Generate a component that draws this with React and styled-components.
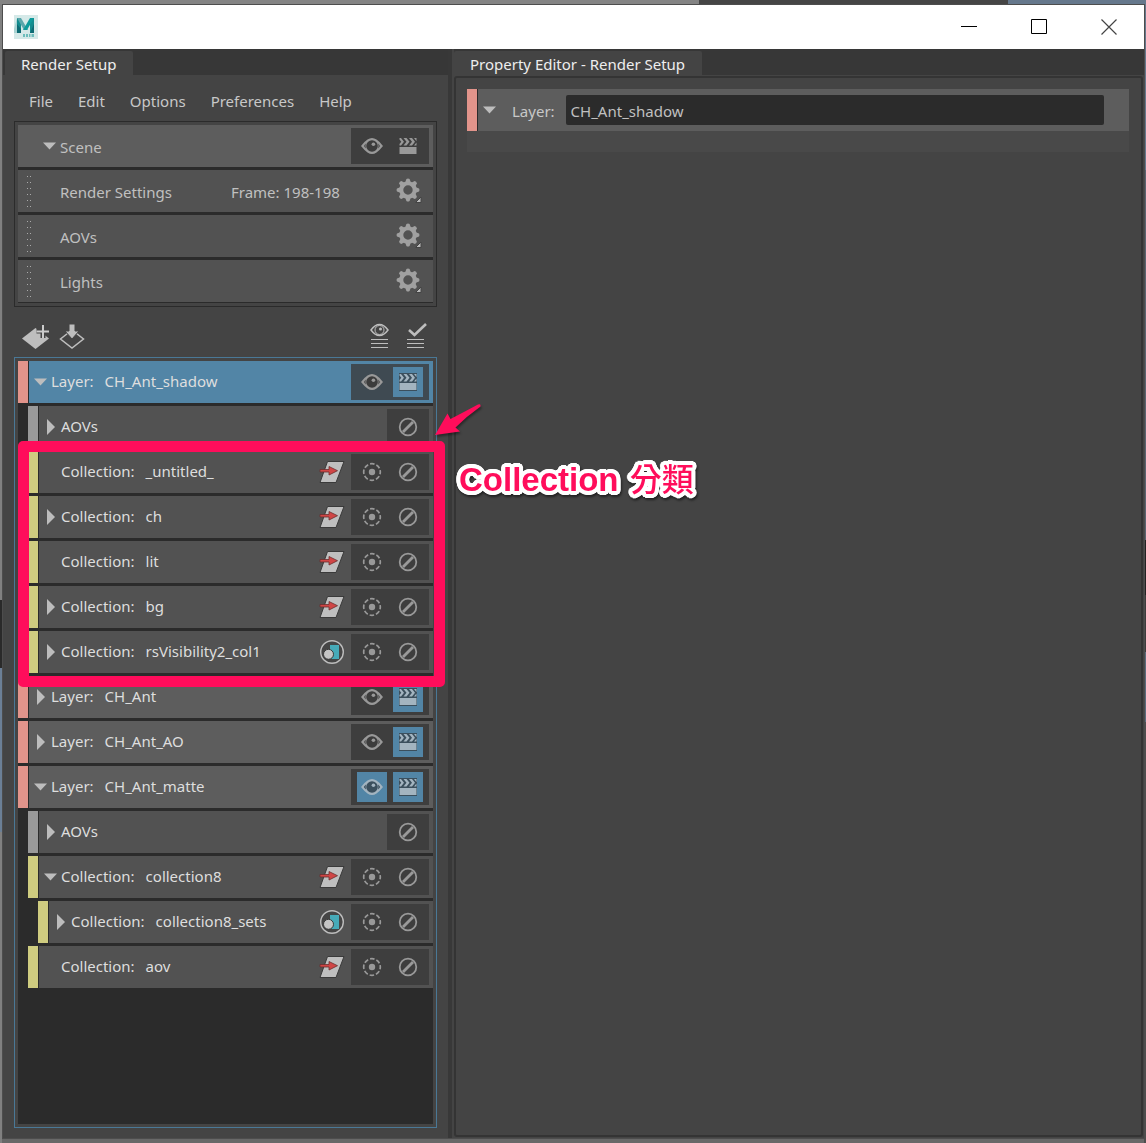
import React from "react";
import styled, { createGlobalStyle, css } from "styled-components";

const Global = createGlobalStyle`
  *, *::before, *::after { box-sizing: border-box; }
  body {
    margin: 0;
    background:
      linear-gradient(90deg, #848484 0 61%, #454545 61% 88%, #66788c 88%) top / 100% 4px no-repeat,
      linear-gradient(#808080 0 600px, #2a2a2a 600px 668px, #6b7f96 668px 832px, #808080 832px) left / 2px 100% no-repeat,
      linear-gradient(#66788c 0 170px, #5a6470 170px 540px, #222 540px 595px, #3c3c3c 595px 652px, #5a6b7c 652px 722px, #4e4e4e 722px) right / 2px 100% no-repeat,
      #686868;
    color: #c8c8c8;
    font: 15px/20px "Noto Sans", "Open Sans", sans-serif;
  }
  button, input { font: inherit; color: inherit; }
  button { border: 0; padding: 0; background: none; cursor: pointer; }
  svg { display: block; }
`;

const Screen = styled.div`
  min-height: 100vh;
  padding: 4px 1px 4px 2px;
  display: flex;
  overflow: hidden;
`;

const Window = styled.main`
  flex: 1;
  display: flex;
  flex-direction: column;
  border: 1px solid #4d4d4d;
  background: #444;
`;

const TitleBar = styled.header`
  height: 44px;
  display: flex;
  align-items: center;
  justify-content: space-between;
  padding-left: 11px;
  background: #fff;
`;

const WindowButtons = styled.div`
  display: flex;
  height: 100%;
`;

const WindowButton = styled.button`
  width: 70px;
  display: grid;
  place-items: center;
`;

const Body = styled.div`
  flex: 1;
  display: flex;
  min-height: 0;
`;

const SetupPanel = styled.section`
  width: 445px;
  flex: none;
  display: flex;
  flex-direction: column;
`;

const Divider = styled.div`
  width: 4px;
  background: #383838;
`;

const EditorPanel = styled.section`
  flex: 1;
  min-width: 0;
  display: flex;
  flex-direction: column;
  margin-left: 2px;
`;

const TabBar = styled.div`
  height: 26px;
  display: flex;
  padding: 2px 0 0 ${(p) => p.$inset}px;
  background: #373737;
`;

const Tab = styled.button`
  padding: 2px 17px 0 16px;
  border-radius: 2px 2px 0 0;
  background: #444;
  color: #eee;
  white-space: nowrap;
`;

const MenuBar = styled.nav`
  display: flex;
  gap: 25px;
  padding: 16px 26px 10px;
`;

const MenuButton = styled.button`
  height: 20px;
`;

const Frame = styled.div`
  margin: 0 11px;
  padding: 3px;
  border: 1px solid ${(p) => (p.$focused ? "#4a7896" : "#2b2b2b")};
  ${(p) =>
    p.$grow &&
    css`
      flex: 1;
      display: flex;
      margin-bottom: 10px;
    `}
`;

const Rows = styled.div`
  flex: 1;
  display: flex;
  flex-direction: column;
  gap: 3px;
  padding-bottom: 1px;
  background: #2b2b2b;
`;

const Kind = styled.span`
  margin-right: 11px;
  white-space: nowrap;
`;

const Name = styled.span`
  flex: 1;
  min-width: 0;
  white-space: nowrap;
`;

const SettingLabel = styled.span`
  width: 171px;
`;

const Row = styled.div`
  height: 42px;
  display: flex;
  align-items: center;
  margin-left: ${(p) => p.$depth * 10}px;
  padding-right: 4px;
  color: ${(p) => (p.$bright ? "#dedede" : "#c0c0c0")};
  background: ${(p) => (p.$selected ? "#5285a6" : p.$strong ? "#5d5d5d" : "#525252")};

  ${Kind}, ${Name}, ${SettingLabel} {
    padding: ${(p) => (p.$bright ? "0 0 2px" : "2px 0 0")};
  }
`;

const Stripe = styled.span`
  width: 11px;
  height: 100%;
  border-right: 1px solid #2b2b2b;
  background: ${(p) => p.$color};
`;

const Toggle = styled.button`
  width: ${(p) => (p.$wide ? 42 : 22)}px;
  height: 100%;
  display: flex;
  align-items: center;
  justify-content: flex-end;
  padding-right: 4px;
`;

const ToggleSpace = styled.span`
  width: 22px;
`;

const Grip = styled.span`
  width: 42px;
  height: 33px;
  padding-left: 9px;
`;

const ButtonTray = styled.div`
  height: 36px;
  display: flex;
  align-items: center;
  gap: 6px;
  padding: 0 6px;
  margin-left: 6px;
  background: ${(p) => (p.$selected ? "#3f4a52" : "#3e3e3e")};
`;

const IconButton = styled.button`
  width: 30px;
  height: 30px;
  display: grid;
  place-items: center;
  color: ${(p) => (p.$on ? "#a3b4c0" : "#999")};
  background: ${(p) => (p.$on ? "#5285a6" : "transparent")};
`;

const GearButton = styled(IconButton)`
  margin-right: 6px;
  color: #a0a0a0;
`;

const ToolBar = styled.div`
  height: 50px;
  display: flex;
  align-items: center;
  gap: 6px;
  padding: 10px 17px 0 18px;
`;

const ToolButton = styled(IconButton)`
  color: #bebebe;
`;

const Spacer = styled.span`
  flex: 1;
`;

const Highlight = styled.div`
  position: relative;
  display: flex;
  flex-direction: column;
  gap: 3px;

  &::after {
    content: "";
    position: absolute;
    z-index: 2;
    inset: -10px -12px -14px 0;
    border: 11px solid #ff0d5b;
    border-radius: 5px;
    pointer-events: none;
  }
`;

const Arrow = styled.svg`
  position: absolute;
  z-index: 3;
  left: 414px;
  top: -51px;
  filter: drop-shadow(1px 2px 1px rgba(0, 0, 0, 0.4));
`;

const outline = Array.from({ length: 24 }, (_, i) => {
  const angle = (i * Math.PI) / 12;
  return `${(4 * Math.cos(angle)).toFixed(2)}px ${(4 * Math.sin(angle)).toFixed(2)}px 0 #fff`;
}).join(", ");

const Note = styled.strong`
  position: absolute;
  z-index: 3;
  left: 441px;
  top: 9px;
  font: bold 33px/40px "Liberation Sans", "Noto Sans CJK TC", sans-serif;
  color: #ff0d5b;
  white-space: nowrap;
  text-shadow: ${outline}, 0 0 2px #fff;
  filter: drop-shadow(1px 2px 1px rgba(0, 0, 0, 0.5));

  span {
    margin-left: 2px;
    font-size: 32px;
    font-weight: 500;
  }
`;

const EditorBody = styled.div`
  flex: 1;
  margin: 1px 1px 1px 0;
  padding: 11px 12px 11px 11px;
  border: 2px solid #343434;
  border-radius: 3px;
`;

const LayerHeader = styled.div`
  height: 42px;
  display: flex;
  align-items: center;
  padding-right: 25px;
  background: #5d5d5d;
`;

const LayerFooter = styled.div`
  height: 21px;
  background: #494949;
`;

const LayerLabel = styled.label`
  margin: 2px 11px 0 12px;
`;

const LayerInput = styled.input`
  flex: 1;
  min-width: 0;
  height: 30px;
  padding: 2px 5px 0;
  border: 0;
  border-radius: 2px;
  background: #2b2b2b;
  color: #c0c0c0;
`;

const Eye = ({ on }) => (
  <svg width="22" height="22" viewBox="0 0 22 22">
    <path d="M0 11Q3.500 6.500 6.500 4.600 11 1.400 15.500 4.600 18.500 6.500 22 11 18.500 15.500 15.500 17.400 11 20.600 6.500 17.400 3.500 15.500 0 11Z" fill="currentColor" />
    <path d="M2.800 11Q4 9.200 5 8.400q-.8 2.600 0 5.200Q4 12.800 2.800 11ZM19.200 11Q18 9.200 17 8.400q.8 2.600 0 5.200 1-.8 2.200-2.600Z" fill={on ? "#3b4f5d" : "#555"} />
    <circle cx="11" cy="11" r="5.800" fill={on ? "#3b4f5d" : "#3c3c3c"} />
    <circle cx="12.400" cy="9.300" r="1.800" fill="currentColor" />
  </svg>
);

const Clapper = ({ on }) => (
  <svg width="18" height="18" viewBox="0 0 18 18">
    {on && <path d="M0 0h18v18H0z" fill="#3b4f5d" />}
    <path d="M.5 10h17v7H.5z" fill="currentColor" />
    <path d="M.5 1h1.500l3 3.700L2 8.500H.5V7l1.800-2.300L.5 2.500zM4.500 1h3l3 3.700-3 3.800h-3l3-3.800zM10 1h3l3 3.700-3 3.800h-3l3-3.800zM15 1h2.500v3.200zM17.500 5.500v3H15z" fill="currentColor" />
  </svg>
);

const Disable = () => (
  <svg width="20" height="20" viewBox="0 0 20 20" fill="none" stroke="currentColor">
    <circle cx="10" cy="10" r="8.300" strokeWidth="1.800" />
    <path d="M5 15 15 5" strokeWidth="2.800" />
  </svg>
);

const Isolate = () => (
  <svg width="20" height="20" viewBox="0 0 20 20">
    <circle cx="10" cy="10" r="8.300" fill="none" stroke="currentColor" strokeWidth="1.700" strokeDasharray="4.500 2.019" strokeDashoffset="2.200" />
    <circle cx="10" cy="10" r="3.200" fill="currentColor" />
  </svg>
);

const Gear = () => (
  <svg width="28" height="28" viewBox="0 0 28 28">
    <circle cx="14" cy="13" r="6.700" fill="none" stroke="currentColor" strokeWidth="4" />
    {[0, 45, 90, 135, 180, 225, 270, 315].map((a) => (
      <path key={a} d="M11 6 12.400 2q1.600-1 3.200 0L17 6z" fill="currentColor" transform={`rotate(${a} 14 13)`} />
    ))}
    <path d="M27 20v5.500h-5.500z" fill="#bbb" stroke="#444" strokeWidth="1" />
  </svg>
);

const Caret = ({ open }) =>
  open ? (
    <svg width="13" height="8" viewBox="0 0 13 8"><path d="M0 .5h13L6.500 7.500z" fill="#bdbdbd" /></svg>
  ) : (
    <svg width="13" height="16" viewBox="0 0 13 16"><path d="M3 0v16l8-8z" fill="#bdbdbd" /></svg>
  );

const CollectionIcon = () => (
  <svg width="26" height="26" viewBox="0 0 26 26">
    <path d="M8.500 2.500h16.500l-8 21H1z" fill="#bfbfbf" stroke="#3a3a3a" />
    <path d="M1 10.500h9V7.500l8.500 4.200L10 16v-3H1z" fill="#d04545" stroke="#6b2f2f" strokeWidth=".8" />
  </svg>
);

const FilterIcon = () => (
  <svg width="26" height="26" viewBox="0 0 26 26">
    <circle cx="13" cy="13" r="11.300" fill="#454545" stroke="#bdbdbd" strokeWidth="1.400" />
    <path d="M11 6h9v14h-9z" fill="#46aab8" />
    <circle cx="9.500" cy="15.300" r="5" fill="#c4c4c4" stroke="#3a3a3a" />
  </svg>
);

const GripDots = () => (
  <svg width="6" height="33" viewBox="0 0 6 33" fill="#aaa">
    {[0, 6, 12, 18, 24, 30].map((y) => (
      <path key={y} d={`M0 ${y + 1}h1v1H0zM3 ${y + 1}h1v1H3z`} />
    ))}
  </svg>
);

const MayaLogo = () => (
  <svg width="24" height="24" viewBox="0 0 24 24" role="img" aria-label="Maya">
    <path d="M0 0h24v24H0z" fill="#d5e9e8" />
    <path d="M0 14 3 3h3v15H0z" fill="#a9d3d2" />
    <path d="M3 3h4v15H3zM16 3h4v15h-4z" fill="#128c8e" />
    <path d="M3 3h4l7 12h-4z" fill="#5aa6ab" />
    <path d="M20 3h-4l-7 12h4z" fill="#0e9a9b" />
    <path d="M3 9v9h4v-4zM20 9v9h-4z" fill="#0c6a73" />
    <path d="M9 19h2v3H9zM12 19h2v3h-2zM15 19h1.500v3H15zM17.500 19H20v3h-2.500z" fill="#6dbdbb" />
  </svg>
);

const AddLayerIcon = () => (
  <svg width="30" height="28" viewBox="0 0 30 28">
    <path d="M1 15.500 14.500 5 28 15.500 14.500 26z" fill="currentColor" />
    <path d="M22 1v14M15.500 8H29" stroke="#444" strokeWidth="5" />
    <path d="M22 2v13M15.500 8.500H28" stroke="#ccc" strokeWidth="2" />
  </svg>
);

const ImportIcon = () => (
  <svg width="28" height="28" viewBox="0 0 28 28">
    <path d="M14 7 2.500 16 14 25l11.500-9z" fill="none" stroke="currentColor" strokeWidth="1.500" />
    <path d="M11 1h6v7h4l-7 8-7-8h4z" fill="currentColor" stroke="#444" />
  </svg>
);

const Lines = () => <path d="M2 16.500h17M2 20.500h17M2 24.500h17" stroke="currentColor" strokeWidth="1.200" />;

const ShowAllIcon = () => (
  <svg width="22" height="28" viewBox="0 0 22 28">
    <path d="M2 7q4-5.500 8.500-5.500T19 7q-4 5.500-8.500 5.500T2 7z" fill="none" stroke="currentColor" strokeWidth="1.500" />
    <circle cx="10.500" cy="7" r="4.500" fill="none" stroke="currentColor" />
    <circle cx="11.500" cy="6" r="1.500" fill="currentColor" />
    <Lines />
  </svg>
);

const CheckAllIcon = () => (
  <svg width="22" height="28" viewBox="0 0 22 28">
    <path d="M4 7 9.500 12 21 1" fill="none" stroke="currentColor" strokeWidth="2.600" />
    <Lines />
  </svg>
);

const COLORS = { layer: "#e2948b", aov: "#999", collection: "#cfcc80" };

function Expander({ state, label, wide }) {
  if (state === undefined) return <ToggleSpace />;
  return (
    <Toggle $wide={wide} aria-label={`Expand ${label}`} aria-expanded={state}>
      <Caret open={state} />
    </Toggle>
  );
}

function LayerRow({ name, open = false, selected, visible }) {
  return (
    <Row $depth={0} $strong $bright $selected={selected}>
      <Stripe $color={COLORS.layer} />
      <Expander state={open} label={name} />
      <Kind>Layer:</Kind>
      <Name>{name}</Name>
      <ButtonTray $selected={selected}>
        <IconButton $on={visible} aria-label="Visible"><Eye on={visible} /></IconButton>
        <IconButton $on aria-label="Renderable"><Clapper on /></IconButton>
      </ButtonTray>
    </Row>
  );
}

function AovRow() {
  return (
    <Row $depth={1} $bright>
      <Stripe $color={COLORS.aov} />
      <Expander state={false} label="AOVs" />
      <Name>AOVs</Name>
      <ButtonTray>
        <IconButton aria-label="Disable"><Disable /></IconButton>
      </ButtonTray>
    </Row>
  );
}

function CollectionRow({ name, depth = 1, open, filtered }) {
  return (
    <Row $depth={depth} $bright>
      <Stripe $color={COLORS.collection} />
      <Expander state={open} label={name} />
      <Kind>Collection:</Kind>
      <Name>{name}</Name>
      {filtered ? <FilterIcon /> : <CollectionIcon />}
      <ButtonTray>
        <IconButton aria-label="Isolate"><Isolate /></IconButton>
        <IconButton aria-label="Disable"><Disable /></IconButton>
      </ButtonTray>
    </Row>
  );
}

function SettingRow({ label, value }) {
  return (
    <Row $depth={0}>
      <Grip><GripDots /></Grip>
      <SettingLabel>{label}</SettingLabel>
      <Name>{value}</Name>
      <GearButton aria-label={`${label} options`}><Gear /></GearButton>
    </Row>
  );
}

export default function App() {
  return (
    <Screen>
      <Global />
      <Window>
        <TitleBar>
          <MayaLogo />
          <WindowButtons>
            <WindowButton aria-label="Minimize">
              <svg width="16" height="16"><path d="M0 7.500h16" stroke="#000" /></svg>
            </WindowButton>
            <WindowButton aria-label="Maximize">
              <svg width="16" height="16"><path d="M.5.5h15v14H.5z" fill="none" stroke="#000" /></svg>
            </WindowButton>
            <WindowButton aria-label="Close">
              <svg width="16" height="16"><path d="m.5.5 15 15m0-15-15 15" stroke="#444" strokeWidth="1.200" /></svg>
            </WindowButton>
          </WindowButtons>
        </TitleBar>
        <Body>
          <SetupPanel>
            <TabBar $inset={2}><Tab>Render Setup</Tab></TabBar>
            <MenuBar>
              {["File", "Edit", "Options", "Preferences", "Help"].map((m) => (
                <MenuButton key={m}>{m}</MenuButton>
              ))}
            </MenuBar>
            <Frame>
              <Rows>
                <Row $depth={0} $strong>
                  <Expander state label="Scene" wide />
                  <Name>Scene</Name>
                  <ButtonTray>
                    <IconButton aria-label="Visible"><Eye /></IconButton>
                    <IconButton aria-label="Renderable"><Clapper /></IconButton>
                  </ButtonTray>
                </Row>
                <SettingRow label="Render Settings" value="Frame: 198-198" />
                <SettingRow label="AOVs" />
                <SettingRow label="Lights" />
              </Rows>
            </Frame>
            <ToolBar>
              <ToolButton aria-label="Create layer"><AddLayerIcon /></ToolButton>
              <ToolButton aria-label="Import"><ImportIcon /></ToolButton>
              <Spacer />
              <ToolButton aria-label="Show all"><ShowAllIcon /></ToolButton>
              <ToolButton aria-label="Enable all"><CheckAllIcon /></ToolButton>
            </ToolBar>
            <Frame $focused $grow>
              <Rows>
                <LayerRow name="CH_Ant_shadow" open selected />
                <AovRow />
                <Highlight>
                  <CollectionRow name="_untitled_" />
                  <CollectionRow name="ch" open={false} />
                  <CollectionRow name="lit" />
                  <CollectionRow name="bg" open={false} />
                  <CollectionRow name="rsVisibility2_col1" open={false} filtered />
                  <Arrow width="52" height="40" viewBox="0 0 52 40">
                    <path d="M3 35 15.500 13.500 18.500 19Q32 12 46 4.500q3-1 2.500 2Q35 16 23.500 27.500L28 31.500z" fill="#ff0d5b" />
                  </Arrow>
                  <Note>Collection <span lang="zh-Hant">分類</span></Note>
                </Highlight>
                <LayerRow name="CH_Ant" />
                <LayerRow name="CH_Ant_AO" />
                <LayerRow name="CH_Ant_matte" open visible />
                <AovRow />
                <CollectionRow name="collection8" open />
                <CollectionRow name="collection8_sets" depth={2} open={false} filtered />
                <CollectionRow name="aov" />
              </Rows>
            </Frame>
          </SetupPanel>
          <Divider />
          <EditorPanel>
            <TabBar $inset={0}><Tab>Property Editor - Render Setup</Tab></TabBar>
            <EditorBody>
              <LayerHeader>
                <Stripe $color={COLORS.layer} />
                <Toggle aria-label="Collapse layer" aria-expanded="true"><Caret open /></Toggle>
                <LayerLabel htmlFor="layer-name">Layer:</LayerLabel>
                <LayerInput id="layer-name" defaultValue="CH_Ant_shadow" />
              </LayerHeader>
              <LayerFooter />
            </EditorBody>
          </EditorPanel>
        </Body>
      </Window>
    </Screen>
  );
}
